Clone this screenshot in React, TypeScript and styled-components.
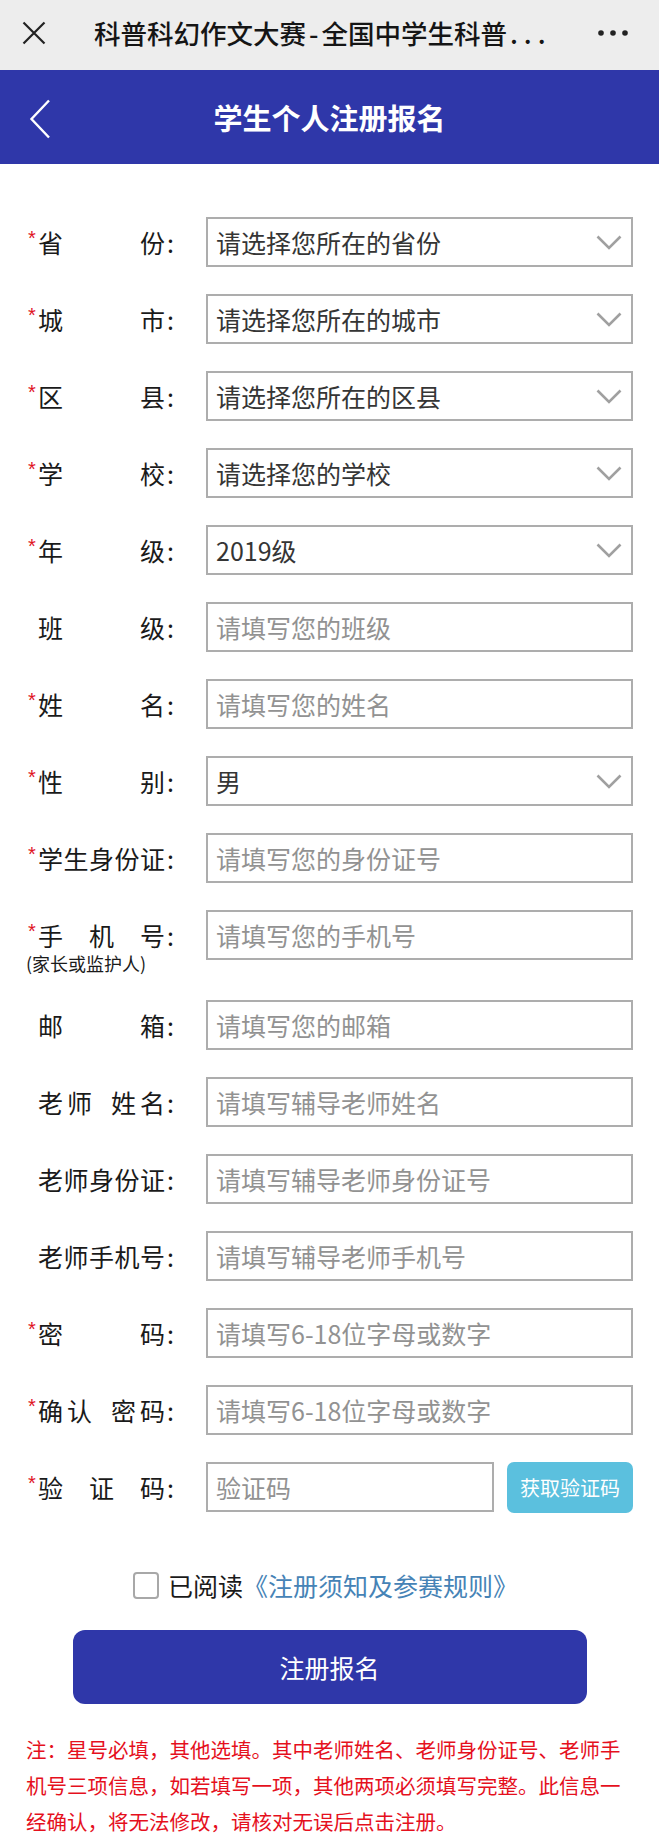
import React from "react";
import styled, { createGlobalStyle } from "styled-components";

const BLUE = "#2f37a9";

type FieldDef = {
  label: string;
  groups?: string[];
  required?: boolean;
  select?: boolean;
  value?: string;
  placeholder?: string;
  sub?: string;
};

const fields: FieldDef[] = [
  { label: "省份", required: true, select: true, value: "请选择您所在的省份" },
  { label: "城市", required: true, select: true, value: "请选择您所在的城市" },
  { label: "区县", required: true, select: true, value: "请选择您所在的区县" },
  { label: "学校", required: true, select: true, value: "请选择您的学校" },
  { label: "年级", required: true, select: true, value: "2019级" },
  { label: "班级", placeholder: "请填写您的班级" },
  { label: "姓名", required: true, placeholder: "请填写您的姓名" },
  { label: "性别", required: true, select: true, value: "男" },
  { label: "学生身份证", required: true, placeholder: "请填写您的身份证号" },
  { label: "手机号", required: true, placeholder: "请填写您的手机号", sub: "(家长或监护人)" },
  { label: "邮箱", placeholder: "请填写您的邮箱" },
  { label: "老师姓名", groups: ["老师", "姓名"], placeholder: "请填写辅导老师姓名" },
  { label: "老师身份证", placeholder: "请填写辅导老师身份证号" },
  { label: "老师手机号", placeholder: "请填写辅导老师手机号" },
  { label: "密码", required: true, placeholder: "请填写6-18位字母或数字" },
  { label: "确认密码", groups: ["确认", "密码"], required: true, placeholder: "请填写6-18位字母或数字" },
];

const GlobalStyle = createGlobalStyle`
  * { box-sizing: border-box; }
  body {
    margin: 0;
    background: #fff;
    color: #1a1a1a;
    font-family: "Noto Sans CJK SC", "Noto Sans", sans-serif;
  }
`;

const Page = styled.div`
  width: 659px;
  min-height: 1843px;
  background: #fff;
`;

const TopBar = styled.div`
  height: 70px;
  background: #ededed;
  display: flex;
  align-items: center;
  padding: 0 31px 4px 22px;
`;

const TopTitle = styled.div`
  flex: 1;
  margin-left: 48px;
  font-size: 26.5px;
  font-weight: 500;
  line-height: 1;
  color: #151515;
  white-space: nowrap;
`;

const Dash = styled.span`
  margin: 0 3px;
`;

const Ellipsis = styled.span`
  margin-left: 3px;
  letter-spacing: 6px;
`;

const Header = styled.div`
  height: 94px;
  background: ${BLUE};
  display: grid;
  grid-template-columns: 1fr auto 1fr;
  align-items: center;
`;

const BackBtn = styled.div`
  padding-left: 29px;
  display: flex;
  align-items: center;
  margin-top: 4px;
`;

const HeaderTitle = styled.h1`
  margin: 0;
  font-size: 29px;
  font-weight: 700;
  color: #fff;
  line-height: 1;
`;

const Form = styled.div`
  padding: 53px 26px 0;
  display: flex;
  flex-direction: column;
  gap: 27px;
`;

const Row = styled.div`
  display: flex;
  align-items: flex-start;
`;

const LabelCol = styled.div`
  width: 180px;
  flex: none;
  display: flex;
  flex-direction: column;
`;

const Label = styled.div`
  height: 50px;
  display: flex;
  align-items: center;
  font-size: 25px;
  line-height: 1;
  color: #1a1a1a;
`;

const Star = styled.span<{ $show: boolean }>`
  width: 12px;
  flex: none;
  align-self: flex-start;
  margin-top: 11px;
  padding-left: 2px;
  font-family: "Liberation Sans", sans-serif;
  font-size: 20px;
  line-height: 20px;
  color: #e0131f;
  visibility: ${(p) => (p.$show ? "visible" : "hidden")};
`;

const Chars = styled.span`
  width: 127px;
  display: flex;
  justify-content: space-between;
`;

const Group = styled.span`
  display: flex;
  gap: 4px;
`;

const Colon = styled.span`
  margin-left: 2px;
`;

const SubLabel = styled.div`
  margin-top: -7px;
  font-size: 18px;
  line-height: 20px;
  color: #1a1a1a;
`;

const boxStyle = `
  width: 100%;
  height: 50px;
  border: 2px solid #adadad;
  border-radius: 0;
  background: #fff;
  font-family: "Noto Sans CJK SC", "Noto Sans", sans-serif;
  font-size: 25px;
  padding: 0 8px;
  outline: none;
`;

const TextBox = styled.input`
  ${boxStyle}
  flex: 1;
  min-width: 0;
  color: #333;
  &::placeholder {
    color: #929292;
  }
`;

const SelectWrap = styled.div`
  position: relative;
  flex: 1;
`;

const SelectBox = styled.select`
  ${boxStyle}
  appearance: none;
  color: #353535;
`;

const Arrow = styled.svg`
  position: absolute;
  right: 11px;
  top: 18px;
  pointer-events: none;
`;

const CodeButton = styled.button`
  flex: none;
  width: 126px;
  height: 51px;
  margin-left: 13px;
  border: none;
  border-radius: 7px;
  background: #5bc0de;
  color: #fff;
  font-family: inherit;
  font-size: 20px;
`;

const AgreeRow = styled.label`
  margin-top: 52px;
  height: 40px;
  display: flex;
  align-items: center;
  justify-content: center;
  font-size: 25px;
  line-height: 1;
  padding-right: 8px;
`;

const Check = styled.input`
  appearance: none;
  width: 26px;
  height: 27px;
  margin: 0 9px 0 0;
  border: 2px solid #a8a8a8;
  border-radius: 4px;
  background: #fff;
`;

const Rules = styled.a`
  color: #4683b6;
  text-decoration: none;
`;

const Submit = styled.button`
  display: block;
  margin: 25px auto 0;
  width: 514px;
  height: 74px;
  border: none;
  border-radius: 12px;
  background: ${BLUE};
  color: #fff;
  font-family: inherit;
  font-size: 25px;
`;

const Note = styled.p`
  margin: 27px 0 0;
  padding: 0 26px;
  font-size: 20.5px;
  line-height: 36px;
  color: #e5101d;
`;

const Chevron = () => (
  <Arrow width="26" height="15" viewBox="0 0 26 15">
    <polyline points="1.5,1.5 13,13 24.5,1.5" fill="none" stroke="#a0a0a0" strokeWidth="2.6" />
  </Arrow>
);

const FieldLabel = ({ f }: { f: FieldDef }) => {
  const groups = f.groups ?? f.label.split("");
  return (
    <LabelCol>
      <Label>
        <Star $show={!!f.required}>*</Star>
        <Chars>
          {groups.map((g, i) => (
            <Group key={i}>
              {g.split("").map((c, j) => (
                <span key={j}>{c}</span>
              ))}
            </Group>
          ))}
        </Chars>
        <Colon>:</Colon>
      </Label>
      {f.sub && <SubLabel>{f.sub}</SubLabel>}
    </LabelCol>
  );
};

const App = () => {
  return (
    <Page>
      <GlobalStyle />
      <TopBar>
        <svg width="24" height="24" viewBox="0 0 24 24">
          <path d="M1.5 1.5 L22.5 22.5 M22.5 1.5 L1.5 22.5" stroke="#222" strokeWidth="2.2" fill="none" />
        </svg>
        <TopTitle>
          科普科幻作文大赛<Dash>-</Dash>全国中学生科普<Ellipsis>...</Ellipsis>
        </TopTitle>
        <svg width="30" height="6" viewBox="0 0 30 6">
          <circle cx="3" cy="3" r="2.8" fill="#222" />
          <circle cx="15" cy="3" r="2.8" fill="#222" />
          <circle cx="27" cy="3" r="2.8" fill="#222" />
        </svg>
      </TopBar>
      <Header>
        <BackBtn>
          <svg width="22" height="40" viewBox="0 0 22 40">
            <polyline points="20,1.5 2.5,20 20,38.5" fill="none" stroke="#fff" strokeWidth="2.4" />
          </svg>
        </BackBtn>
        <HeaderTitle>学生个人注册报名</HeaderTitle>
        <div />
      </Header>
      <Form>
        {fields.map((f) => (
          <Row key={f.label}>
            <FieldLabel f={f} />
            {f.select ? (
              <SelectWrap>
                <SelectBox defaultValue={f.value}>
                  <option>{f.value}</option>
                </SelectBox>
                <Chevron />
              </SelectWrap>
            ) : (
              <TextBox placeholder={f.placeholder} />
            )}
          </Row>
        ))}
        <Row>
          <FieldLabel f={{ label: "验证码", required: true }} />
          <TextBox placeholder="验证码" />
          <CodeButton>获取验证码</CodeButton>
        </Row>
      </Form>
      <AgreeRow>
        <Check type="checkbox" />
        已阅读
        <Rules>《注册须知及参赛规则》</Rules>
      </AgreeRow>
      <Submit>注册报名</Submit>
      <Note>
        注：星号必填，其他选填。其中老师姓名、老师身份证号、老师手机号三项信息，如若填写一项，其他两项必须填写完整。此信息一经确认，将无法修改，请核对无误后点击注册。
      </Note>
    </Page>
  );
};

export default App;
